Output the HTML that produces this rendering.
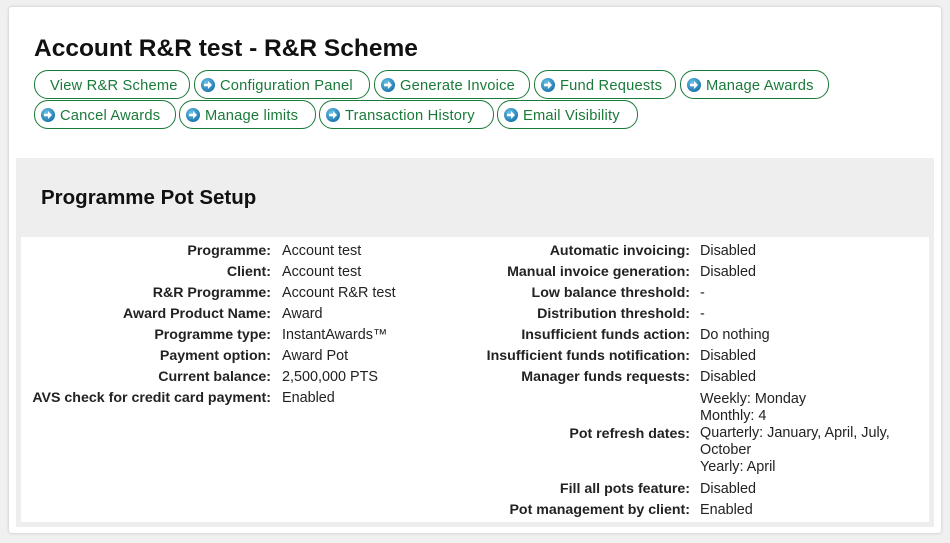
<!DOCTYPE html>
<html><head><meta charset="utf-8"><style>
body{margin:0;background:#f0f0f0;font-family:"Liberation Sans",Arial,sans-serif;width:950px;height:543px;overflow:hidden;position:relative}
.card{position:absolute;left:9px;top:7px;width:932px;height:526px;background:#fff;border-radius:3px;box-shadow:0 0 3px rgba(0,0,0,.2)}
h1{position:absolute;left:25px;top:28px;margin:0;font-size:24.5px;font-weight:bold;color:#111}
.btn{position:absolute;border:1px solid #1a7a3a;border-radius:14px;color:#1a7a3a;font-size:14.7px;line-height:27px;padding-top:2px;box-sizing:border-box;height:29px;padding-left:6px;white-space:nowrap;letter-spacing:.2px}
.btn.noicon{padding-left:15px}
.ic{display:inline-block;width:14px;height:14px;vertical-align:-2px;margin-right:5px}
.gray{position:absolute;left:7px;top:151px;width:918px;height:369px;background:#eeeeee}
h2{position:absolute;left:25px;top:28px;margin:0;font-size:20.5px;font-weight:bold;color:#111}
.inner{position:absolute;left:5px;top:79px;width:908px;height:285px;background:#fff}
.r{position:absolute;font-size:14.4px;color:#222;line-height:17px;white-space:nowrap}
.l{font-weight:bold;text-align:right;font-size:14.2px}
</style></head><body>
<svg width="0" height="0" style="position:absolute"><defs><radialGradient id="g" cx="40%" cy="35%" r="70%"><stop offset="0" stop-color="#6cc4ea"/><stop offset="1" stop-color="#1570a8"/></radialGradient>
<symbol id="a" viewBox="0 0 14 14"><circle cx="7" cy="7" r="7" fill="url(#g)"/><path d="M3 5.8h4V3l4 4-4 4V8.2H3z" fill="#fff"/></symbol></defs></svg>
<div class="card">
<h1>Account R&amp;R test - R&amp;R Scheme</h1>
<div class="btn noicon" style="left:25px;top:63px;width:156px">View R&amp;R Scheme</div>
<div class="btn" style="left:185px;top:63px;width:176px"><svg class="ic"><use href="#a"/></svg>Configuration Panel</div>
<div class="btn" style="left:365px;top:63px;width:156px"><svg class="ic"><use href="#a"/></svg>Generate Invoice</div>
<div class="btn" style="left:525px;top:63px;width:142px"><svg class="ic"><use href="#a"/></svg>Fund Requests</div>
<div class="btn" style="left:671px;top:63px;width:149px"><svg class="ic"><use href="#a"/></svg>Manage Awards</div>
<div class="btn" style="left:25px;top:93px;width:142px"><svg class="ic"><use href="#a"/></svg>Cancel Awards</div>
<div class="btn" style="left:170px;top:93px;width:137px"><svg class="ic"><use href="#a"/></svg>Manage limits</div>
<div class="btn" style="left:310px;top:93px;width:175px"><svg class="ic"><use href="#a"/></svg>Transaction History</div>
<div class="btn" style="left:488px;top:93px;width:141px"><svg class="ic"><use href="#a"/></svg>Email Visibility</div>
<div class="gray"><h2>Programme Pot Setup</h2><div class="inner"></div></div>
</div>
<div class="r l" style="right:679px;top:241px;line-height:21px">Programme:<br>Client:<br>R&amp;R Programme:<br>Award Product Name:<br>Programme type:<br>Payment option:<br>Current balance:<br>AVS check for credit card payment:</div>
<div class="r" style="left:282px;top:241px;line-height:21px">Account test<br>Account test<br>Account R&amp;R test<br>Award<br>InstantAwards™<br>Award Pot<br>2,500,000 PTS<br>Enabled</div>
<div class="r l" style="right:260px;top:241px;line-height:21px">Automatic invoicing:<br>Manual invoice generation:<br>Low balance threshold:<br>Distribution threshold:<br>Insufficient funds action:<br>Insufficient funds notification:<br>Manager funds requests:</div>
<div class="r" style="left:700px;top:241px;line-height:21px">Disabled<br>Disabled<br>-<br>-<br>Do nothing<br>Disabled<br>Disabled</div>
<div class="r" style="left:700px;top:391px">Weekly: Monday<br>Monthly: 4<br>Quarterly: January, April, July,<br>October<br>Yearly: April</div>
<div class="r l" style="right:260px;top:426px">Pot refresh dates:</div>
<div class="r l" style="right:260px;top:479px;line-height:21px">Fill all pots feature:<br>Pot management by client:</div>
<div class="r" style="left:700px;top:479px;line-height:21px">Disabled<br>Enabled</div>
</body></html>
